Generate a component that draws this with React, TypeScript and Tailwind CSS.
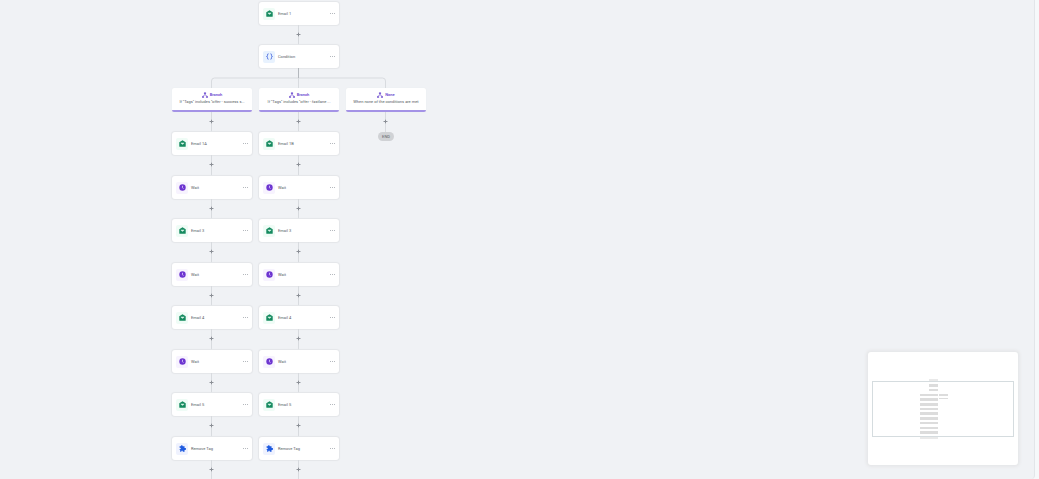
import React from "react";

type Kind = "email" | "wait" | "tag" | "condition";
type Step = { kind: Kind; label: string };

const leftSteps: Step[] = [
  { kind: "email", label: "Email 1A" },
  { kind: "wait", label: "Wait" },
  { kind: "email", label: "Email 3" },
  { kind: "wait", label: "Wait" },
  { kind: "email", label: "Email 4" },
  { kind: "wait", label: "Wait" },
  { kind: "email", label: "Email 5" },
  { kind: "tag", label: "Remove Tag" },
];

const rightSteps: Step[] = leftSteps.map((step, i) =>
  i === 0 ? { kind: "email", label: "Email 1B" } : step,
);

const tileColors: Record<Kind, string> = {
  email: "bg-[#effcf6] text-[#158a5f]",
  wait: "bg-[#f7f3fe] text-[#6d35d0]",
  tag: "bg-[#eff2fe] text-[#1f5be0]",
  condition: "bg-[#e8f2fe] text-[#4a6be0]",
};

function StepIcon({ kind }: { kind: Kind }) {
  if (kind === "email")
    return (
      <svg viewBox="0 0 24 24" className="size-[7px]" aria-hidden="true">
        <path fill="currentColor" d="M12 1 23 8v13a2 2 0 0 1-2 2H3a2 2 0 0 1-2-2V8z" />
        <path fill="#d5f3e6" d="M6 9h12v2l-6 5-6-5z" />
      </svg>
    );
  if (kind === "wait")
    return (
      <svg viewBox="0 0 24 24" className="size-[7px]" aria-hidden="true">
        <circle cx="12" cy="12" r="11" fill="currentColor" />
        <path d="M12 6v7l3 3" fill="none" stroke="#d9c8fb" strokeWidth="3" />
      </svg>
    );
  if (kind === "tag")
    return (
      <svg viewBox="0 0 24 24" className="size-[7px]" aria-hidden="true">
        <path
          fill="currentColor"
          d="M2 4h4a3 3 0 0 1 7 0h6v6h2a3 3 0 0 1 0 7h-2v6h-6v-2a3 3 0 0 0-5 0v2H4v-7H2v-2h2a2 2 0 0 0 0-5H2z"
        />
      </svg>
    );
  return (
    <svg viewBox="0 0 24 24" className="size-[7px]" aria-hidden="true">
      <path
        d="M9 3H7Q5 3 5 6v3q0 3-3 3 3 0 3 3v3q0 3 2 3h2M15 3h2q2 0 2 3v3q0 3 3 3-3 0-3 3v3q0 3-2 3h-2"
        fill="none"
        stroke="currentColor"
        strokeWidth="3"
      />
    </svg>
  );
}

function StepCard({ kind, label }: Step) {
  return (
    <div className="flex h-[23px] w-20 items-center rounded-[3px] bg-white px-1 shadow-[0_0_1px_1px_#e4e6e9]">
      <span className={`flex size-3 items-center justify-center rounded-[2px] ${tileColors[kind]}`}>
        <StepIcon kind={kind} />
      </span>
      <span className="ml-[3px] flex-1 text-[4px] leading-[6px] whitespace-nowrap text-[#555b63]">{label}</span>
      <button type="button" aria-label={`${label} options`} className="flex h-2 w-[6px] items-center justify-center">
        <svg viewBox="0 0 6 2" className="h-[2px] w-[6px]" fill="#b4b8bd" aria-hidden="true">
          <path d="M1 0h1v1H1zM3 0h1v1H3zM5 0h1v1H5z" />
        </svg>
      </button>
    </div>
  );
}

function Connector({ short = false }: { short?: boolean }) {
  return (
    <div className={`flex flex-col items-center pr-px ${short ? "h-5" : "h-[21px]"}`}>
      <span className="h-[7px] w-px bg-[#d8dbdf]" />
      <button type="button" aria-label="Add step" className="flex size-[5px] items-center justify-center">
        <svg viewBox="0 0 5 5" className="size-[5px]" aria-hidden="true">
          <path d="M1 2h3v1H1zM2 1h1v3H2z" fill="#8b8f96" />
          <path d="M0 2h1v1H0zM4 2h1v1H4zM2 0h1v1H2zM2 4h1v1H2z" fill="#c2c5ca" />
        </svg>
      </button>
      <span className="w-px flex-1 bg-[#d8dbdf]" />
    </div>
  );
}

function BranchCard({ title, text }: { title: string; text: string }) {
  return (
    <div className="flex h-6 w-20 flex-col items-center rounded-[2px] border-b-2 border-[#a493e6] bg-white pt-1 shadow-[0_0_1px_#e2e4e7]">
      <div className="flex items-center gap-[2px] text-[#6c4bd0]">
        <svg viewBox="0 0 12 12" className="size-[6px]" fill="none" stroke="currentColor" aria-hidden="true">
          <path d="M6 2v3L2 9M6 5l4 4" strokeWidth="1.5" />
          <path d="M4.500 1h3v3h-3zM.5 8.500h3v3h-3zM8.500 8.500h3v3h-3z" fill="currentColor" strokeWidth=".5" />
        </svg>
        <h2 className="text-[4px] leading-[6px] font-semibold">{title}</h2>
      </div>
      <p className="mt-px text-[4px] leading-[6px] whitespace-nowrap text-[#555b63]">{text}</p>
    </div>
  );
}

function BranchColumn({ title, text, steps }: { title: string; text: string; steps: Step[] }) {
  return (
    <section className="flex flex-col items-center">
      <BranchCard title={title} text={text} />
      <Connector short />
      {steps.map((step, i) => (
        <React.Fragment key={i}>
          <StepCard {...step} />
          <Connector short={step.kind === "wait"} />
        </React.Fragment>
      ))}
    </section>
  );
}

const mapBars = [
  [61, 27, 9, 2],
  [61, 32, 9, 3],
  [61, 37, 9, 2],
  [52, 42, 18, 2],
  [71, 42, 9, 2],
  [71, 46, 9, 1],
  [52, 46, 18, 3],
  [52, 51, 18, 3],
  [52, 56, 18, 2],
  [52, 60, 18, 3],
  [52, 65, 18, 3],
  [52, 70, 18, 2],
  [52, 75, 18, 2],
  [52, 79, 18, 3],
  [52, 84, 18, 3],
];

function MiniMap() {
  return (
    <aside
      aria-label="Overview map"
      className="absolute right-4 bottom-[14px] rounded-[3px] bg-white shadow-[0_0_3px_2px_#e6e7e9]"
    >
      <svg viewBox="0 0 150 113" className="h-[113px] w-[150px]">
        {mapBars.map(([x, y, w, h], i) => (
          <rect
            key={i}
            x={x}
            y={y}
            width={w}
            height={h}
            fill={i === 0 || i === mapBars.length - 1 ? "#e9e9e9" : "#dcdcdc"}
          />
        ))}
        <rect x="4.5" y="29.5" width="141" height="55" fill="none" stroke="#d5dcdf" />
      </svg>
    </aside>
  );
}

export default function App() {
  return (
    <div className="h-screen overflow-hidden bg-[#f6f8fa] pr-1 font-[Roboto,sans-serif]">
      <main className="relative h-full overflow-hidden rounded-br-[4px] border-r border-[#e2e5e9] bg-[#f0f2f5] pt-[2px] pl-[172px]">
        <div className="flex w-[254px] flex-col items-center">
          <StepCard kind="email" label="Email 1" />
          <Connector short />
          <StepCard kind="condition" label="Condition" />
          <svg viewBox="0 0 254 20" className="h-5 w-full" fill="none" aria-hidden="true">
            <path d="M39.500 20v-7q0-3 3-3h168q3 0 3 3v7M126.500 10v10" stroke="#d8dbdf" />
            <path d="M126.500 0v10" stroke="#b4b8bd" />
          </svg>
          <div className="flex items-start gap-[7px]">
            <BranchColumn title="Branch" text={'If "Tags" includes "offer - success s...'} steps={leftSteps} />
            <BranchColumn title="Branch" text={'If "Tags" includes "offer - fastlane ...'} steps={rightSteps} />
            <section className="flex flex-col items-center">
              <BranchCard title="None" text="When none of the conditions are met" />
              <Connector short />
              <span className="flex h-[9px] w-4 items-center justify-center rounded-full bg-[#d0d2d5] text-[4px] leading-[6px] text-[#5f646b]">
                END
              </span>
            </section>
          </div>
        </div>
        <MiniMap />
      </main>
    </div>
  );
}
